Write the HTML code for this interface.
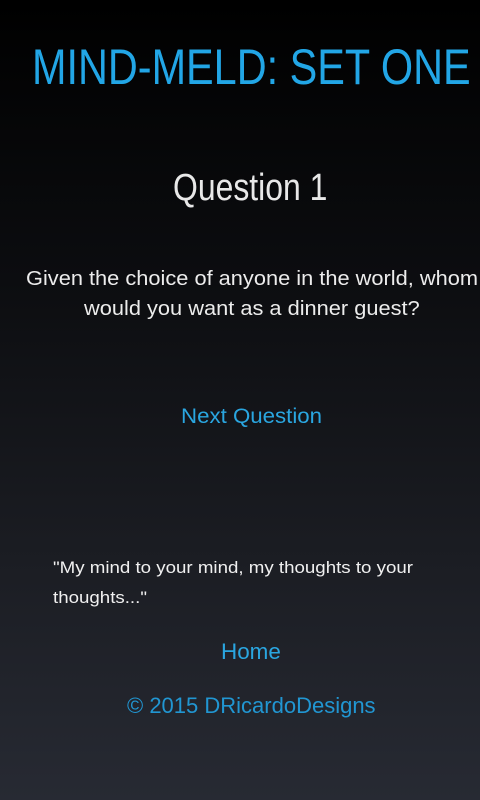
<!DOCTYPE html>
<html><head><meta charset="utf-8"><style>
html,body{margin:0;padding:0}
body{width:480px;height:800px;overflow:hidden;position:relative;background:linear-gradient(#000 0%,#0c0d10 35%,#1b1d23 70%,#272a33 100%);font-family:"Liberation Sans",sans-serif}
.t{position:absolute;white-space:nowrap;transform-origin:0 0}
</style></head><body>
<div class="t" style="left:32px;top:38px;font-size:50px;color:#22a6e6;transform:scaleX(0.828)">MIND-MELD: SET ONE</div>
<div class="t" style="left:173px;top:167px;font-size:38px;color:#e8e8e8;transform:scaleX(0.84)">Question 1</div>
<div class="t" style="left:26px;top:264px;font-size:20px;line-height:30px;color:#ececec;transform:scaleX(1.09)">Given the choice of anyone in the world, whom</div>
<div class="t" style="left:84px;top:294px;font-size:20px;line-height:30px;color:#ececec;transform:scaleX(1.09)">would you want as a dinner guest?</div>
<div class="t" style="left:181px;top:405px;font-size:21px;color:#2aa6e0;transform:scaleX(1.06)">Next Question</div>
<div class="t" style="left:53px;top:558px;font-size:17px;color:#f0f0f0;transform:scaleX(1.1)">"My mind to your mind, my thoughts to your</div>
<div class="t" style="left:53px;top:588px;font-size:17px;color:#f0f0f0;transform:scaleX(1.1)">thoughts..."</div>
<div class="t" style="left:221px;top:639px;font-size:22px;color:#2aa6e0;transform:scaleX(1.02)">Home</div>
<div class="t" style="left:127px;top:693px;font-size:22px;color:#2196d2;transform:scaleX(1.0)">© 2015 DRicardoDesigns</div>
</body></html>
